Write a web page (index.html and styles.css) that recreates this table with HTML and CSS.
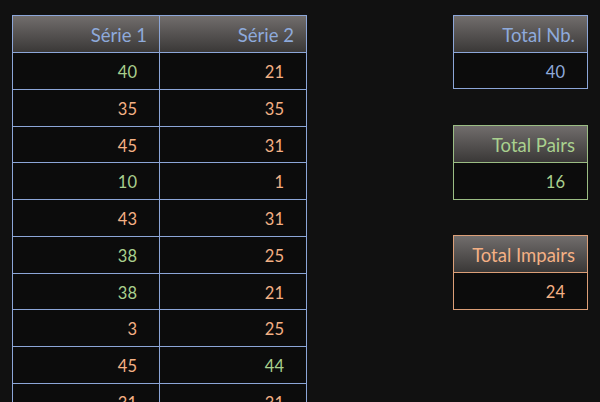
FILE: index.html
```html
<!DOCTYPE html>
<html lang="fr">
<head>
<meta charset="utf-8">
<title>Séries</title>
<link rel="stylesheet" href="styles.css">
</head>
<body>
<div class="sheet">
  <div class="table">
    <div class="cell head">Série 1</div>
    <div class="cell head">Série 2</div>
    <div class="cell even">40</div><div class="cell odd">21</div>
    <div class="cell odd">35</div><div class="cell odd">35</div>
    <div class="cell odd">45</div><div class="cell odd">31</div>
    <div class="cell even">10</div><div class="cell odd">1</div>
    <div class="cell odd">43</div><div class="cell odd">31</div>
    <div class="cell even">38</div><div class="cell odd">25</div>
    <div class="cell even">38</div><div class="cell odd">21</div>
    <div class="cell odd">3</div><div class="cell odd">25</div>
    <div class="cell odd">45</div><div class="cell even">44</div>
    <div class="cell odd">31</div><div class="cell odd">31</div>
  </div>
  <div class="totals">
    <div class="box box-blue">
      <div class="box-head">Total Nb.</div>
      <div class="box-val">40</div>
    </div>
    <div class="box box-green">
      <div class="box-head">Total Pairs</div>
      <div class="box-val">16</div>
    </div>
    <div class="box box-orange">
      <div class="box-head">Total Impairs</div>
      <div class="box-val">24</div>
    </div>
  </div>
</div>
</body>
</html>
```
FILE: styles.css
```css
html, body {
  margin: 0;
  padding: 0;
  background: #111111;
  overflow: hidden;
}
body {
  width: 600px;
  height: 402px;
  font-family: Lato, "Open Sans", sans-serif;
}
.sheet {
  display: flex;
  align-items: flex-start;
  gap: 146px;
  padding: 15px 0 0 12px;
}
.table {
  display: grid;
  grid-template-columns: 147px 147px;
  grid-template-rows: 37px 37px 37px 36px 37px 37px 37px 36px 37px 37px 37px;
  border-left: 1px solid #8ca6d8;
  border-top: 1px solid #8ca6d8;
  background: #0c0c0c;
}
.cell {
  box-sizing: border-box;
  border-right: 1px solid #8ca6d8;
  border-bottom: 1px solid #8ca6d8;
  display: flex;
  align-items: center;
  justify-content: flex-end;
  padding: 2px 22px 0 0;
  font-size: 16.5px;
}
.cell.head {
  background: linear-gradient(#716d6c, #3a3837);
  color: #8eaadb;
  font-size: 18.5px;
  padding: 1px 12px 0 0;
}
.even { color: #a9d08e; }
.odd { color: #f4b084; }

.totals {
  display: flex;
  flex-direction: column;
}
.box {
  width: 135px;
  box-sizing: border-box;
  border-width: 1px;
  border-style: solid;
  background: #0c0c0c;
}
.box-head {
  box-sizing: border-box;
  height: 37px;
  border-bottom-width: 1px;
  border-bottom-style: solid;
  background: linear-gradient(#716d6c, #3a3837);
  display: flex;
  align-items: center;
  justify-content: flex-end;
  padding: 1px 12px 0 0;
  font-size: 18.5px;
}
.box-val {
  height: 36px;
  display: flex;
  align-items: center;
  justify-content: flex-end;
  padding: 2px 22px 0 0;
  box-sizing: border-box;
  font-size: 16.5px;
}
.box-blue { border-color: #8ca6d8; color: #8eaadb; }
.box-blue .box-head { border-bottom-color: #8ca6d8; }
.box-blue .box-val { height: 35px; }
.box-green { border-color: #9bbd84; color: #a9d08e; margin-top: 36px; }
.box-green .box-head { border-bottom-color: #9bbd84; }
.box-orange { border-color: #dc9f78; color: #f4b084; margin-top: 35px; }
.box-orange .box-head { border-bottom-color: #dc9f78; }
```
